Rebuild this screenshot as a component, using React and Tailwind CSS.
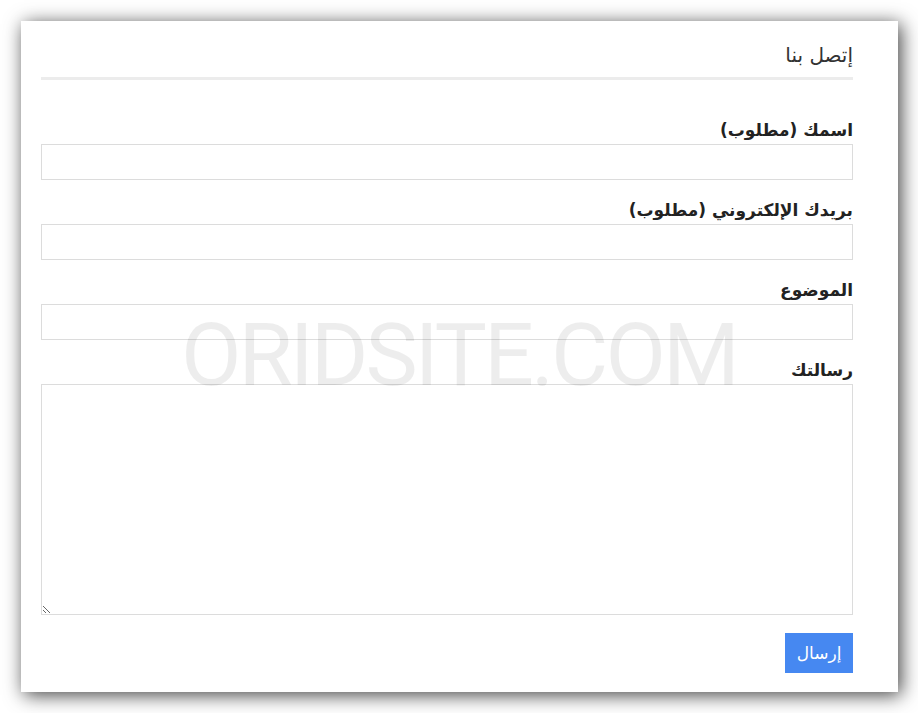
import React from "react";

const labelCls =
  "block text-[17px] font-bold text-[#222] leading-[20px] mb-[4px] font-['DejaVu_Sans',sans-serif]";
const inputCls =
  "block w-full h-[36px] border border-[#dcdcdc] bg-white outline-none";

export default function App() {
  return (
    <div className="w-[918px] h-[713px] bg-white p-[21px] pr-[20px] pb-[21px] font-['DejaVu_Sans',sans-serif]">
      <div
        dir="rtl"
        className="relative w-[877px] h-[671px] bg-white shadow-[3px_3px_18px_rgba(0,0,0,0.75)] pl-[20px] pr-[45px] pt-[18px]"
      >
        <h2 className="text-[20px] font-normal text-[#333] leading-[32px] pb-[6px] border-b-[3px] border-[#ececec]">
          إتصل بنا
        </h2>
        <form className="mt-[40px]">
          <label className={labelCls}>اسمك (مطلوب)</label>
          <input className={inputCls} />
          <label className={labelCls + " mt-[20px]"}>بريدك الإلكتروني (مطلوب)</label>
          <input className={inputCls} />
          <label className={labelCls + " mt-[20px]"}>الموضوع</label>
          <input className={inputCls} />
          <label className={labelCls + " mt-[20px]"}>رسالتك</label>
          <textarea className="block w-full h-[231px] border border-[#dcdcdc] bg-white outline-none resize-y" />
          <div className="flex justify-start mt-[18px]">
            <button
              type="button"
              className="w-[68px] h-[40px] bg-[#4688f1] text-white text-[17px] leading-[40px] font-['DejaVu_Sans',sans-serif]"
            >
              إرسال
            </button>
          </div>
        </form>
        <div
          dir="ltr"
          className="pointer-events-none absolute left-[160px] top-[290px] text-[88px] leading-none font-['Roboto',sans-serif] font-normal tracking-[-3px] text-[rgba(0,0,0,0.07)] select-none"
        >
          ORIDSITE.COM
        </div>
      </div>
    </div>
  );
}
